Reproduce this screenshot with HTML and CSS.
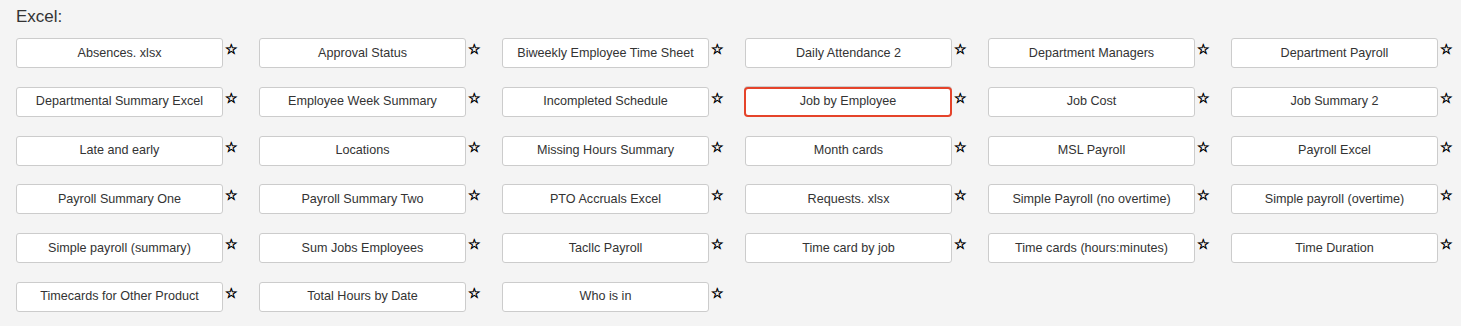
FILE: index.html
```html
<!DOCTYPE html>
<html>
<head>
<meta charset="utf-8">
<link rel="stylesheet" href="styles.css">
</head>
<body>
<div class="page">
  <h2 class="title">Excel:</h2>
  <div class="grid">
    <div class="item"><button class="btn">Absences. xlsx</button><span class="star">☆</span></div>
    <div class="item"><button class="btn">Approval Status</button><span class="star">☆</span></div>
    <div class="item"><button class="btn">Biweekly Employee Time Sheet</button><span class="star">☆</span></div>
    <div class="item"><button class="btn">Daily Attendance 2</button><span class="star">☆</span></div>
    <div class="item"><button class="btn">Department Managers</button><span class="star">☆</span></div>
    <div class="item"><button class="btn">Department Payroll</button><span class="star">☆</span></div>

    <div class="item"><button class="btn">Departmental Summary Excel</button><span class="star">☆</span></div>
    <div class="item"><button class="btn">Employee Week Summary</button><span class="star">☆</span></div>
    <div class="item"><button class="btn">Incompleted Schedule</button><span class="star">☆</span></div>
    <div class="item"><button class="btn active">Job by Employee</button><span class="star">☆</span></div>
    <div class="item"><button class="btn">Job Cost</button><span class="star">☆</span></div>
    <div class="item"><button class="btn">Job Summary 2</button><span class="star">☆</span></div>

    <div class="item"><button class="btn">Late and early</button><span class="star">☆</span></div>
    <div class="item"><button class="btn">Locations</button><span class="star">☆</span></div>
    <div class="item"><button class="btn">Missing Hours Summary</button><span class="star">☆</span></div>
    <div class="item"><button class="btn">Month cards</button><span class="star">☆</span></div>
    <div class="item"><button class="btn">MSL Payroll</button><span class="star">☆</span></div>
    <div class="item"><button class="btn">Payroll Excel</button><span class="star">☆</span></div>

    <div class="item"><button class="btn">Payroll Summary One</button><span class="star">☆</span></div>
    <div class="item"><button class="btn">Payroll Summary Two</button><span class="star">☆</span></div>
    <div class="item"><button class="btn">PTO Accruals Excel</button><span class="star">☆</span></div>
    <div class="item"><button class="btn">Requests. xlsx</button><span class="star">☆</span></div>
    <div class="item"><button class="btn">Simple Payroll (no overtime)</button><span class="star">☆</span></div>
    <div class="item"><button class="btn">Simple payroll (overtime)</button><span class="star">☆</span></div>

    <div class="item"><button class="btn">Simple payroll (summary)</button><span class="star">☆</span></div>
    <div class="item"><button class="btn">Sum Jobs Employees</button><span class="star">☆</span></div>
    <div class="item"><button class="btn">Tacllc Payroll</button><span class="star">☆</span></div>
    <div class="item"><button class="btn">Time card by job</button><span class="star">☆</span></div>
    <div class="item"><button class="btn">Time cards (hours:minutes)</button><span class="star">☆</span></div>
    <div class="item"><button class="btn">Time Duration</button><span class="star">☆</span></div>

    <div class="item"><button class="btn">Timecards for Other Product</button><span class="star">☆</span></div>
    <div class="item"><button class="btn">Total Hours by Date</button><span class="star">☆</span></div>
    <div class="item"><button class="btn">Who is in</button><span class="star">☆</span></div>
  </div>
</div>
</body>
</html>
```

FILE: styles.css
```css
html, body {
  margin: 0;
  padding: 0;
  background: #f4f4f4;
}
body {
  font-family: "Liberation Sans", Arial, sans-serif;
  color: #333;
}
.page {
  padding: 6px 0 0 16px;
}
.title {
  margin: 0 0 10px 0;
  font-size: 17px;
  font-weight: normal;
  line-height: 22px;
  color: #333;
}
.grid {
  display: grid;
  grid-template-columns: repeat(6, 227px);
  column-gap: 16px;
  row-gap: 18.8px;
}
.item {
  display: flex;
  align-items: flex-start;
}
.btn {
  box-sizing: border-box;
  width: 207px;
  height: 30px;
  padding: 0 6px 1px;
  background: #fff;
  border: 1px solid #ccc;
  border-radius: 3px;
  font-family: "Liberation Sans", Arial, sans-serif;
  font-size: 12.6px;
  color: #333;
  text-align: center;
  white-space: nowrap;
}
.btn.active {
  border: 2px solid #e5432a;
  border-radius: 4px;
  box-shadow: 0 -1px 0 #ccc;
  width: 208px;
  margin-left: -1px;
}
.star {
  flex: none;
  margin-left: 2px;
  margin-top: 4px;
  font-family: "DejaVu Sans", sans-serif;
  font-size: 14px;
  line-height: 14px;
  color: #000;
  -webkit-text-stroke: 0.55px #000;
}
```
